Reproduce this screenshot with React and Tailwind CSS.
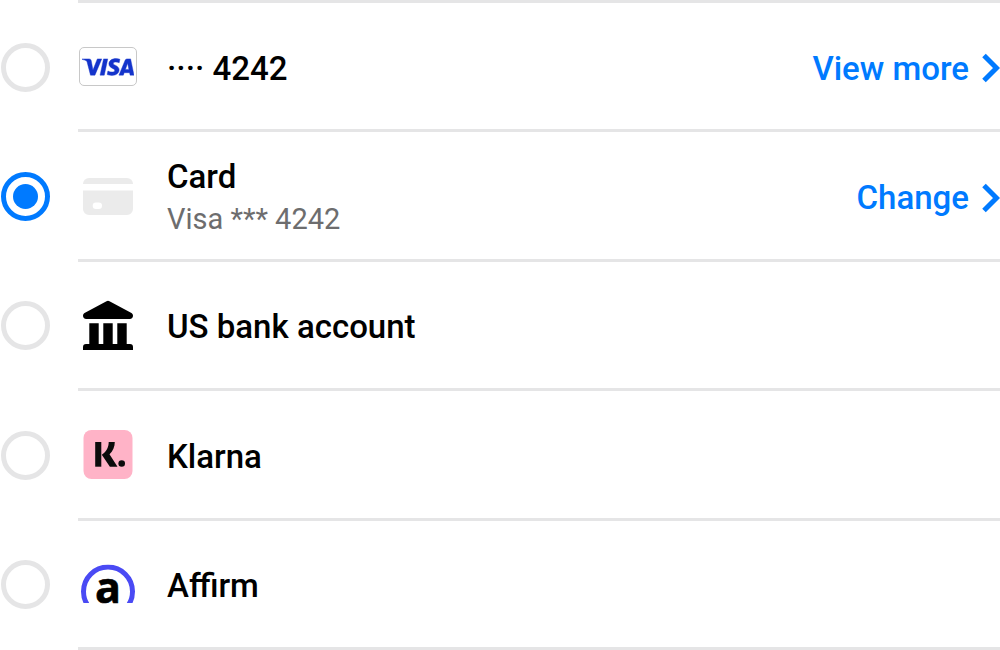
import { useState } from "react";
import { SiVisa } from "react-icons/si";

function VisaLogo() {
  return (
    <span className="flex h-[39px] w-[58px] items-center justify-center rounded-[5px] border border-[#c8c8c8] bg-white pt-px">
      <SiVisa
        size={52}
        color="#1434cb"
        stroke="#1434cb"
        strokeWidth={0.2}
        className="shrink-0"
        aria-hidden="true"
      />
    </span>
  );
}

function CardIcon() {
  return (
    <svg width="50" height="37" viewBox="0 0 50 37" fill="#ebebeb" aria-hidden="true">
      <path d="M0 6V6a6 6 0 0 1 6-6h38a6 6 0 0 1 6 6z" />
      <path
        fillRule="evenodd"
        d="M0 12.500h50V31a6 6 0 0 1-6 6H6a6 6 0 0 1-6-6zM12.900 24.600a3.200 3.200 0 0 0 0 6.400h2.900a3.200 3.200 0 0 0 0-6.400z"
      />
    </svg>
  );
}

function BankIcon() {
  return (
    <svg width="50" height="50" viewBox="0 0 50 50" aria-hidden="true">
      <path d="M23.500 1.200a3 3 0 0 1 3 0L48 12.700c1.200.7 2 1.600 2 3 0 1.800-1.300 3.200-3.200 3.200H3.200C1.300 18.900 0 17.500 0 15.700c0-1.400.8-2.300 2-3z" />
      <path d="M6.300 23.200h9.400V44h4.600V23.200h9.400V44h4.600V23.200h9.400V44H47a3 3 0 0 1 3 3V50H0v-3a3 3 0 0 1 3-3h3.300z" />
    </svg>
  );
}

function KlarnaLogo() {
  return (
    <svg width="50" height="50" viewBox="0 0 50 50" fill="#0b0b0b" aria-hidden="true">
      <rect width="49" height="49" x=".5" y="0" rx="8" fill="#ffb3c7" />
      <path d="M12.200 12h6.100V36.700h-6.100z" />
      <path d="M25.700 12h6.100c0 5-1.900 9-5.300 12.300L34.500 36.700h-7.600L18.800 24.800c4.600-3.200 6.900-7.300 6.900-12.800z" />
      <circle cx="38.700" cy="33.500" r="3.300" />
    </svg>
  );
}

function AffirmLogo() {
  return (
    <svg width="54" height="68" viewBox="0 -14.5 54 68" aria-hidden="true">
      <clipPath id="affirm-arc">
        <rect width="54" height="38.500" />
      </clipPath>
      <circle
        cx="27"
        cy="27"
        r="24.500"
        fill="none"
        stroke="#4a4af4"
        strokeWidth="5"
        clipPath="url(#affirm-arc)"
      />
      <text
        x="27"
        y="38.500"
        textAnchor="middle"
        fontSize="43"
        fontWeight="700"
        fontFamily="Open Sans, sans-serif"
        stroke="#000"
        strokeWidth=".6"
      >
        a
      </text>
    </svg>
  );
}

function Chevron() {
  return (
    <svg width="18" height="30" viewBox="0 0 18 30" fill="none" aria-hidden="true">
      <path d="M2 2.500L14.500 15L2 27.500" stroke="#007aff" strokeWidth="5" />
    </svg>
  );
}

const methods = [
  { id: "saved", label: "···· 4242", Icon: VisaLogo, action: "View more" },
  { id: "card", label: "Card", detail: "Visa *** 4242", Icon: CardIcon, action: "Change" },
  { id: "bank", label: "US bank account", Icon: BankIcon },
  { id: "klarna", label: "Klarna", Icon: KlarnaLogo },
  { id: "affirm", label: "Affirm", Icon: AffirmLogo },
];

export default function App() {
  const [selected, setSelected] = useState("card");

  return (
    <main className="flex min-h-screen flex-col bg-white font-['Roboto',sans-serif] text-black">
      <div className="ml-[78px] border-t-[3px] border-[#e5e5e6]" />
      <ul className="grid flex-1 auto-rows-fr">
        {methods.map(({ id, label, detail, Icon, action }) => (
          <li key={id} className="flex gap-7 pl-px">
            <input
              type="radio"
              id={id}
              name="payment"
              checked={selected === id}
              onChange={() => setSelected(id)}
              className="mb-px grid size-[49px] shrink-0 appearance-none place-items-center self-center rounded-full border-[5px] border-[#e5e5e6] before:size-[25px] before:rounded-full checked:border-[#007aff] checked:before:bg-[#007aff]"
            />
            <div className="flex flex-1 items-center border-b-[3px] border-[#e5e5e6] pt-px">
              <label htmlFor={id} className="flex flex-1 items-center gap-[29px]">
                <span className="flex w-[60px] shrink-0 justify-center">
                  <Icon />
                </span>
                <span className="flex flex-col pt-[3px]">
                  <span className="text-[33px] leading-[43px] font-medium">{label}</span>
                  {detail && <span className="text-[29px] leading-[42px] text-[#6d6d6e]">{detail}</span>}
                </span>
              </label>
              {action && (
                <button
                  type="button"
                  className="flex items-center gap-[13px] pt-[3px] text-[33px] leading-[43px] font-medium text-[#007aff]"
                >
                  {action}
                  <Chevron />
                </button>
              )}
            </div>
          </li>
        ))}
      </ul>
    </main>
  );
}
